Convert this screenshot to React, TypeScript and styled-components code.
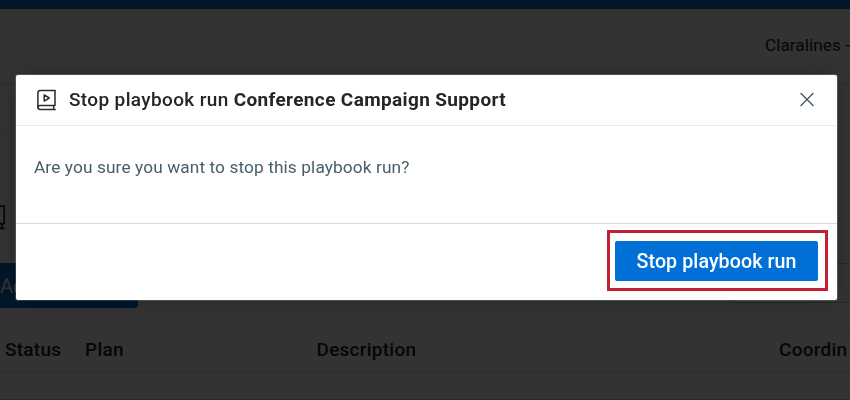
import React from "react";
import styled, { createGlobalStyle } from "styled-components";

const GlobalStyle = createGlobalStyle`
  *, *::before, *::after { box-sizing: border-box; }
  html, body { margin: 0; width: 100%; height: 100%; overflow: hidden; background: #fff; }
  body { font-family: Roboto, "Liberation Sans", sans-serif; color: #222; }
`;

const Page = styled.div`
  height: 400px;
  width: 850px;
  display: flex;
  flex-direction: column;
  overflow: hidden;
  background: #fff;
  white-space: nowrap;
`;

const TopBar = styled.div`
  flex: none;
  height: 9px;
  background: #0a6ed1;
`;

const AccountBar = styled.header`
  flex: none;
  height: 75px;
  padding-left: 765px;
  border-bottom: 1px solid #d8d8d8;
  font-size: 17.3px;
  line-height: 72px;
`;

const TabStrip = styled.div`
  flex: none;
  height: 45px;
  border-bottom: 1px solid #ececec;
`;

const TitleRow = styled.div`
  flex: none;
  height: 134px;
  padding-top: 76px;
`;

const ActionRow = styled.div`
  flex: none;
  height: 66px;
  display: flex;
  justify-content: space-between;
  align-items: flex-start;
`;

const AddButton = styled.button`
  width: 138px;
  height: 45px;
  padding: 0;
  border: 0;
  border-radius: 0 3px 3px 0;
  background: #0a6ed1;
  color: #fff;
  font: 400 20px Roboto, sans-serif;
  text-align: left;
`;

const SearchBox = styled.div`
  width: 120px;
  height: 40px;
  border: 1px solid #c4c4c4;
  border-right: 0;
  border-radius: 3px 0 0 3px;
`;

const TableHead = styled.div`
  flex: none;
  height: 43px;
  display: grid;
  grid-template-columns: 80px 231.5px 462.5px 71px;
  padding: 0 0 2px 5px;
  align-items: center;
  border-top: 1px solid #e6e6e6;
  border-bottom: 1px solid #dcdcdc;
  font-size: 19px;
  font-weight: 500;
  letter-spacing: 0.25px;
`;

const TableRow = styled.div`
  flex: none;
  height: 28px;
  border-bottom: 1px solid #d6bcbc;
`;

const Backdrop = styled.div`
  position: fixed;
  inset: 0;
  padding: 75px 14px 0 16px;
  background: rgba(0, 0, 0, 0.8);
`;

const Dialog = styled.section`
  height: 225px;
  width: 820.5px;
  display: flex;
  flex-direction: column;
  border-radius: 2px;
  background: #fff;
  box-shadow: 0 0 0 1px rgba(255, 255, 255, 0.16), 0 0 24px rgba(0, 0, 0, 0.25);
  white-space: nowrap;
`;

const DialogHeader = styled.header`
  flex: none;
  height: 51px;
  display: flex;
  align-items: center;
  padding: 0 21.5px 0 20px;
  border-bottom: 1px solid #ebebeb;
`;

const DialogTitle = styled.h1`
  flex: 1;
  margin: 0 0 0 12px;
  padding-bottom: 1px;
  color: #252525;
  font-size: 19px;
  font-weight: 500;
  letter-spacing: 0.36px;
`;

const PlanName = styled.strong`
  font-weight: 700;
`;

const CloseButton = styled.button`
  display: flex;
  padding: 0;
  border: 0;
  background: none;
  color: #475568;
`;

const DialogBody = styled.div`
  flex: none;
  height: 98px;
  padding: 31px 18px;
  border-bottom: 1px solid #d9d9d9;
  color: #475e6b;
  font-size: 17.3px;
  font-weight: 450;
  line-height: 20px;
  letter-spacing: 0.1px;
`;

const DialogFooter = styled.footer`
  flex: 1;
  display: flex;
  justify-content: flex-end;
  align-items: flex-start;
  padding: 6px 8.5px 0 0;
`;

const Highlight = styled.div`
  width: 221px;
  height: 61px;
  padding: 8px 7px 9px 5px;
  border: 3px solid #c02032;
`;

const StopButton = styled.button`
  display: block;
  width: 203px;
  height: 40px;
  padding: 0;
  border: 0;
  border-radius: 2px;
  background: #0070d6;
  color: #fff;
  font: 500 19.6px Roboto, sans-serif;
  letter-spacing: 0.1px;
`;

const PlaybookIcon = () => (
  <svg width="21" height="22" viewBox="0 0 21 22" fill="none" stroke="#2c2c2c" strokeWidth="1.5" strokeLinejoin="round" strokeLinecap="round">
    <path d="M18.9 1.5H4.2Q1.9 1.7 1.9 4v14q0 2.5 2.4 2.5h14.9" />
    <path d="M19 1.5v15.1H4.2q-2.2 0-2.3 1.7M17.7 16.8v3.5" />
    <path d="M8.2 5.9v6.2l5-3.1z" />
  </svg>
);

const MonitorIcon = () => (
  <svg width="6" height="25" viewBox="0 0 6 25" fill="none" stroke="#222" strokeWidth="1.7">
    <path d="M0 1.2h4.2v17.5H0M2 19v4M0 23.3h4.8" />
  </svg>
);

const CloseIcon = () => (
  <svg width="16" height="16" viewBox="0 0 16 16" fill="none" stroke="currentColor" strokeWidth="1.4" strokeLinecap="round">
    <path d="M2 1.5l12 12M14 1.5L2 13.5" />
  </svg>
);

export default function App() {
  return (
    <>
      <GlobalStyle />
      <Page>
        <TopBar />
        <AccountBar>Claralines -</AccountBar>
        <TabStrip />
        <TitleRow><MonitorIcon /></TitleRow>
        <ActionRow>
          <AddButton>Add</AddButton>
          <SearchBox />
        </ActionRow>
        <TableHead>
          <span>Status</span>
          <span>Plan</span>
          <span>Description</span>
          <span>Coordin</span>
        </TableHead>
        <TableRow />
      </Page>
      <Backdrop>
        <Dialog role="dialog" aria-modal="true">
          <DialogHeader>
            <PlaybookIcon />
            <DialogTitle>
              Stop playbook run <PlanName>Conference Campaign Support</PlanName>
            </DialogTitle>
            <CloseButton aria-label="Close"><CloseIcon /></CloseButton>
          </DialogHeader>
          <DialogBody>Are you sure you want to stop this playbook run?</DialogBody>
          <DialogFooter>
            <Highlight>
              <StopButton>Stop playbook run</StopButton>
            </Highlight>
          </DialogFooter>
        </Dialog>
      </Backdrop>
    </>
  );
}
